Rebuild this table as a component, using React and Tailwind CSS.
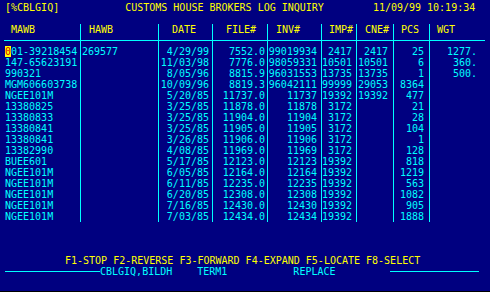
import React from "react";

const rows = [
  ["001-39218454", "269577", "4/29/99", "7552.0", "99019934", "2417", "2417", "25", "1277."],
  ["147-65623191", "", "11/03/98", "7776.0", "98059331", "10501", "10501", "6", "360."],
  ["990321", "", "8/05/96", "8815.9", "96031553", "13735", "13735", "1", "500."],
  ["MGM606603738", "", "10/09/96", "8819.3", "96042111", "99999", "29053", "8364", ""],
  ["NGEE101M", "", "5/20/85", "11737.0", "11737", "19392", "19392", "477", ""],
  ["13380825", "", "3/25/85", "11878.0", "11878", "3172", "", "21", ""],
  ["13380833", "", "3/25/85", "11904.0", "11904", "3172", "", "28", ""],
  ["13380841", "", "3/25/85", "11905.0", "11905", "3172", "", "104", ""],
  ["13380841", "", "3/26/85", "11906.0", "11906", "3172", "", "1", ""],
  ["13382990", "", "4/08/85", "11969.0", "11969", "3172", "", "128", ""],
  ["BUEE601", "", "5/17/85", "12123.0", "12123", "19392", "", "818", ""],
  ["NGEE101M", "", "6/05/85", "12164.0", "12164", "19392", "", "1219", ""],
  ["NGEE101M", "", "6/11/85", "12235.0", "12235", "19392", "", "563", ""],
  ["NGEE101M", "", "6/20/85", "12308.0", "12308", "19392", "", "1082", ""],
  ["NGEE101M", "", "7/16/85", "12430.0", "12430", "19392", "", "905", ""],
  ["NGEE101M", "", "7/03/85", "12434.0", "12434", "19392", "", "1888", ""],
];

// one entry per column of the grid: width, header padding, data alignment
const columns = [
  { head: "MAWB", box: "w-[80px]", headCls: "pl-[11px]", cellCls: "pl-[5px] text-left", lineCls: "ml-[4px]" },
  { head: "HAWB", box: "w-[78px] border-l border-[#00ffff]", headCls: "pl-[8px]", cellCls: "pl-[1px] text-left", lineCls: "" },
  { head: "DATE", box: "w-[54px] border-l border-[#00ffff]", headCls: "pl-[13px]", cellCls: "pr-[3px] text-right", lineCls: "" },
  { head: "FILE#", box: "w-[55px] border-l border-[#00ffff]", headCls: "pl-[13px]", cellCls: "pr-[2px] text-right", lineCls: "" },
  { head: "INV#", box: "w-[54px] border-l border-[#00ffff]", headCls: "pl-[8px]", cellCls: "pr-[4px] text-right", lineCls: "" },
  { head: "IMP#", box: "w-[35px] border-l border-[#00ffff]", headCls: "pl-[7px]", cellCls: "pr-[4px] text-right", lineCls: "" },
  { head: "CNE#", box: "w-[37px] border-l border-[#00ffff]", headCls: "pl-[8px]", cellCls: "pr-[5px] text-right", lineCls: "" },
  { head: "PCS", box: "w-[36px] border-l border-[#00ffff]", headCls: "pl-[7px]", cellCls: "pr-[5px] text-right", lineCls: "" },
  { head: "WGT", box: "w-[56px] border-l border-[#00ffff]", headCls: "pl-[7px]", cellCls: "pr-[8px] text-right", lineCls: "" },
];

const Cell = ({ value, col, row, className }) => {
  if (col === 0 && row === 0) {
    // cursor sits on the first character
    return (
      <div className={`h-[11px] whitespace-pre ${className}`}>
        <span className="bg-[#ffff00] text-[#d40000]">{value[0]}</span>
        {value.slice(1)}
      </div>
    );
  }
  return <div className={`h-[11px] whitespace-pre ${className}`}>{value}</div>;
};

export default function App() {
  return (
    <div className="w-[490px] h-[292px] bg-black overflow-hidden">
      <div
        className="h-[291px] bg-[#000080] pt-[2px] text-[10px] leading-[11px] text-[#00ffff]"
        style={{ fontFamily: '"DejaVu Sans Mono", "Liberation Mono", monospace' }}
      >
        {/* title row */}
        <div className="flex h-[11px] text-[#ffff00] whitespace-pre">
          <span className="pl-[5px]">[%CBLGIQ]</span>
          <span className="ml-[66px]">CUSTOMS HOUSE BROKERS LOG INQUIRY</span>
          <span className="ml-[49px]">11/09/99 10:19:34</span>
        </div>
        <div className="h-[11px]" />

        {/* table */}
        <div className="flex">
          {columns.map((c, ci) => (
            <div key={c.head} className={`flex flex-col ${c.box}`}>
              <div className={`h-[11px] text-[#ffff00] ${c.headCls}`}>{c.head}</div>
              <div className="h-[11px] flex items-center">
                <div className={`h-px flex-1 bg-[#00ffff] ${c.lineCls}`} />
              </div>
              {rows.map((r, ri) => (
                <Cell key={ri} value={r[ci]} col={ci} row={ri} className={c.cellCls} />
              ))}
            </div>
          ))}
        </div>

        <div className="h-[33px]" />

        {/* function keys */}
        <div className="h-[11px] pl-[65px] text-[#ffff00] whitespace-pre">
          F1-STOP F2-REVERSE F3-FORWARD F4-EXPAND F5-LOCATE F8-SELECT
        </div>

        {/* status line */}
        <div className="h-[11px] flex items-center whitespace-pre">
          <div className="ml-[5px] w-[95px] h-px bg-[#00ffff]" />
          <span>CBLGIQ,BILDH</span>
          <span className="ml-[25px]">TERM1</span>
          <span className="ml-[66px]">REPLACE</span>
          <div className="ml-[54px] w-[89px] h-px bg-[#00ffff]" />
        </div>
      </div>
    </div>
  );
}
